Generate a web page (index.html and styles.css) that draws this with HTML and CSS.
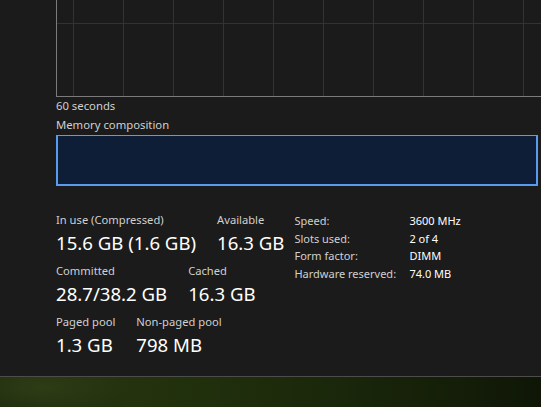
FILE: index.html
```html
<!DOCTYPE html>
<html>
<head>
<meta charset="utf-8">
<link rel="stylesheet" href="styles.css">
</head>
<body>
<div class="window">
  <div class="content">
    <div class="graph"></div>
    <div class="caption time">60 seconds</div>
    <div class="caption comp">Memory composition</div>
    <div class="composition"></div>
    <div class="stats">
      <div class="left">
        <div class="row r1">
          <div class="stat"><div class="label">In use (Compressed)</div><div class="value">15.6 GB (1.6 GB)</div></div>
          <div class="stat"><div class="label">Available</div><div class="value">16.3 GB</div></div>
        </div>
        <div class="row">
          <div class="stat"><div class="label">Committed</div><div class="value">28.7/38.2 GB</div></div>
          <div class="stat"><div class="label">Cached</div><div class="value">16.3 GB</div></div>
        </div>
        <div class="row">
          <div class="stat"><div class="label">Paged pool</div><div class="value">1.3 GB</div></div>
          <div class="stat"><div class="label">Non-paged pool</div><div class="value">798 MB</div></div>
        </div>
      </div>
      <div class="specs">
        <div class="k">Speed:</div><div class="v">3600 MHz</div>
        <div class="k">Slots used:</div><div class="v">2 of 4</div>
        <div class="k">Form factor:</div><div class="v">DIMM</div>
        <div class="k">Hardware reserved:</div><div class="v">74.0 MB</div>
      </div>
    </div>
  </div>
</div>
<div class="wallpaper"></div>
</body>
</html>
```

FILE: styles.css
```css
html, body {
  margin: 0;
  padding: 0;
  width: 541px;
  height: 407px;
  overflow: hidden;
  background: #1b1b1b;
}
body {
  font-family: "Noto Sans", "Open Sans", sans-serif;
  color: #d4d4d4;
}
.window {
  height: 376px;
  background: #1b1b1b;
  border-bottom: 1px solid #4c4c4c;
  overflow: hidden;
}
.content {
  padding-left: 56px;
  display: flex;
  flex-direction: column;
}
.graph {
  width: 520px;
  height: 96px;
  border-left: 1px solid #7b7b7b;
  border-bottom: 1px solid #7b7b7b;
  background-color: #1b1b1b;
  background-image:
    linear-gradient(to bottom, transparent 23px, #333333 23px, #333333 24px, transparent 24px),
    repeating-linear-gradient(to right, transparent 0, transparent 16px, #333333 16px, #333333 17px, transparent 17px, transparent 50px);
  background-repeat: no-repeat, repeat;
}
.caption {
  font-size: 11.3px;
  line-height: 14px;
  color: #d0d0d0;
}
.time {
  margin-top: 2px;
}
.comp {
  margin-top: 5px;
}
.composition {
  margin-top: 3px;
  width: 478px;
  height: 48px;
  border: 2px solid #5a9bf2;
  border-width: 1px 2px 2px 2px;
  background: #0f1e37;
}
.stats {
  display: flex;
  margin-top: 26px;
}
.left {
  display: flex;
  flex-direction: column;
  gap: 5px;
}
.row {
  display: flex;
  gap: 21px;
}
.stat {
  display: flex;
  flex-direction: column;
}
.label {
  font-size: 11.2px;
  line-height: 16px;
  color: #d0d0d0;
}
.value {
  font-size: 18.6px;
  line-height: 30px;
  color: #ffffff;
}
.specs {
  margin-left: 10px;
  display: grid;
  grid-template-columns: 115px auto;
  grid-auto-rows: 17.6px;
  font-size: 11px;
  line-height: 17.6px;
  align-content: start;
}
.k {
  color: #d0d0d0;
}
.v {
  color: #ffffff;
}
.wallpaper {
  height: 30px;
  background:
    radial-gradient(ellipse 90px 30px at 40px 10px, rgba(60,75,30,0.5), transparent),
    linear-gradient(to right, #1f2c0d 0%, #24330d 25%, #1c2a0b 55%, #141e08 85%, #0f1606 100%);
}
```
